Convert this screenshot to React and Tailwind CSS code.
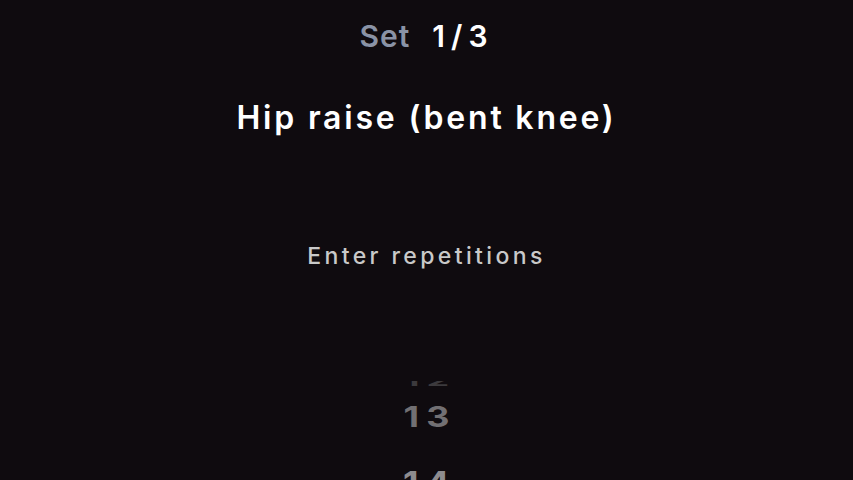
import React from "react";

export default function App() {
  return (
    <div className="w-[853px] h-[480px] overflow-hidden bg-[#0f0b0f] flex flex-col items-center" style={{ fontFamily: "Inter, 'Noto Sans', sans-serif" }}>
      <div className="mt-[17px] flex items-baseline gap-[22px] text-[30px] leading-[38px] font-semibold">
        <span className="text-[#8a93a6] tracking-[1px]">Set</span>
        <span className="text-white tracking-[6px]">1/3</span>
      </div>
      <h1 className="mt-[41px] text-[32px] leading-[44px] font-semibold text-white tracking-[2.8px]">Hip raise (bent knee)</h1>
      <p className="mt-[100px] text-[23px] leading-[32px] font-medium text-[#c9c9c9] tracking-[3.4px]">Enter repetitions</p>
      <div className="mt-[109px] h-[101px] w-[160px] shrink-0 overflow-hidden flex flex-col items-center pl-[7px]">
        <div className="shrink-0 -mt-[8px] h-[16px] leading-[16px] flex items-center text-[36px] font-bold tracking-[7px] text-[#3c3a3d] scale-y-[0.4]">12</div>
        <div className="shrink-0 h-[56px] flex items-center text-[36px] font-bold tracking-[7px] text-[#727073] scale-y-[0.78]">13</div>
        <div className="shrink-0 h-[76px] flex items-center text-[36px] font-bold tracking-[7px] text-[#8e8c8f] scale-y-[0.9]">14</div>
      </div>
    </div>
  );
}
